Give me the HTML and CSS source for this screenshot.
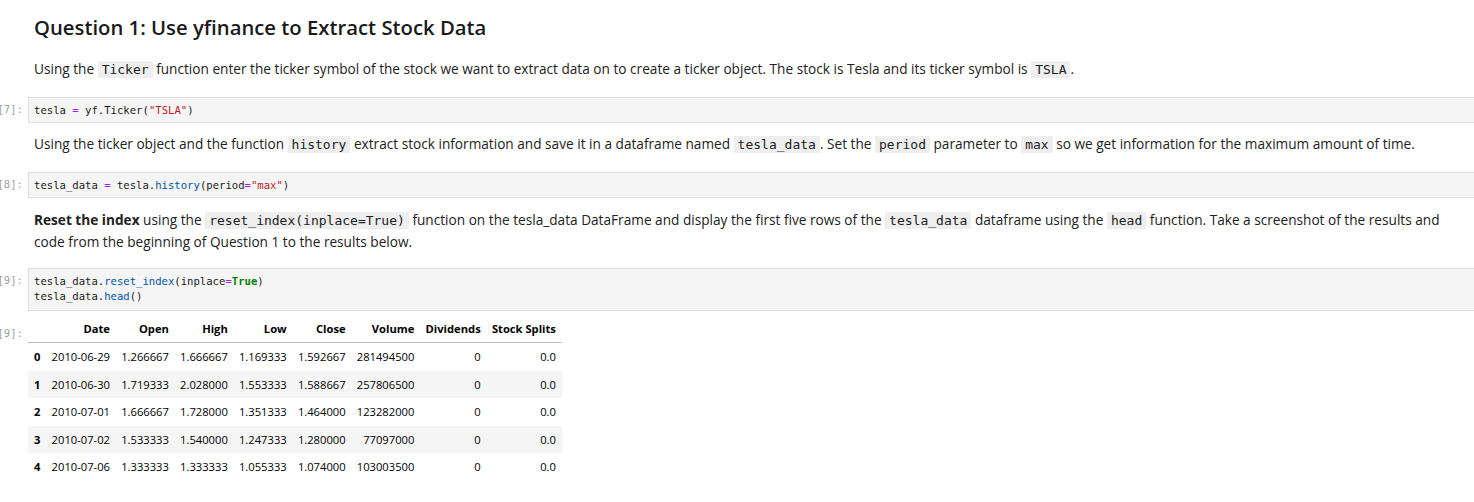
FILE: index.html
```html
<!DOCTYPE html>
<html>
<head>
<meta charset="utf-8">
<link rel="stylesheet" href="styles.css">
</head>
<body>
<div class="notebook">
  <div class="cell md">
    <div class="prompt"></div>
    <div class="content">
      <h2 class="title">Question 1: Use yfinance to Extract Stock Data</h2>
    </div>
  </div>
  <div class="cell md">
    <div class="prompt"></div>
    <div class="content">
      <p class="para">Using the <code class="ic">Ticker</code> function enter the ticker symbol of the stock we want to extract data on to create a ticker object. The stock is Tesla and its ticker symbol is <code class="ic">TSLA</code>.</p>
    </div>
  </div>
  <div class="cell code">
    <div class="prompt">[7]:</div>
    <div class="editor"><span class="v">tesla</span> <span class="op">=</span> <span class="v">yf</span>.<span class="v">Ticker</span>(<span class="s">"TSLA"</span>)</div>
  </div>
  <div class="cell md">
    <div class="prompt"></div>
    <div class="content">
      <p class="para">Using the ticker object and the function <code class="ic">history</code> extract stock information and save it in a dataframe named <code class="ic">tesla_data</code>. Set the <code class="ic">period</code> parameter to <code class="ic">max</code> so we get information for the maximum amount of time.</p>
    </div>
  </div>
  <div class="cell code">
    <div class="prompt">[8]:</div>
    <div class="editor"><span class="v">tesla_data</span> <span class="op">=</span> <span class="v">tesla</span>.<span class="p">history</span>(<span class="v">period</span><span class="op">=</span><span class="s">"max"</span>)</div>
  </div>
  <div class="cell md">
    <div class="prompt"></div>
    <div class="content">
      <p class="para"><strong>Reset the index</strong> using the <code class="ic">reset_index(inplace=True)</code> function on the tesla_data DataFrame and display the first five rows of the <code class="ic">tesla_data</code> dataframe using the <code class="ic">head</code> function. Take a screenshot of the results and code from the beginning of Question 1 to the results below.</p>
    </div>
  </div>
  <div class="cell code">
    <div class="prompt">[9]:</div>
    <div class="editor tall"><span class="v">tesla_data</span>.<span class="p">reset_index</span>(<span class="v">inplace</span><span class="op">=</span><span class="k">True</span>)
<span class="v">tesla_data</span>.<span class="p">head</span>()</div>
  </div>
  <div class="cell output">
    <div class="prompt oprompt">[9]:</div>
    <div class="outarea">
      <table class="df">
        <thead>
          <tr><th></th><th>Date</th><th>Open</th><th>High</th><th>Low</th><th>Close</th><th>Volume</th><th>Dividends</th><th>Stock Splits</th></tr>
        </thead>
        <tbody>
          <tr><th>0</th><td>2010-06-29</td><td>1.266667</td><td>1.666667</td><td>1.169333</td><td>1.592667</td><td>281494500</td><td>0</td><td>0.0</td></tr>
          <tr><th>1</th><td>2010-06-30</td><td>1.719333</td><td>2.028000</td><td>1.553333</td><td>1.588667</td><td>257806500</td><td>0</td><td>0.0</td></tr>
          <tr><th>2</th><td>2010-07-01</td><td>1.666667</td><td>1.728000</td><td>1.351333</td><td>1.464000</td><td>123282000</td><td>0</td><td>0.0</td></tr>
          <tr><th>3</th><td>2010-07-02</td><td>1.533333</td><td>1.540000</td><td>1.247333</td><td>1.280000</td><td>77097000</td><td>0</td><td>0.0</td></tr>
          <tr><th>4</th><td>2010-07-06</td><td>1.333333</td><td>1.333333</td><td>1.055333</td><td>1.074000</td><td>103003500</td><td>0</td><td>0.0</td></tr>
        </tbody>
      </table>
    </div>
  </div>
</div>
</body>
</html>
```
FILE: styles.css
```css
html, body {
  margin: 0;
  padding: 0;
  background: #ffffff;
  overflow: hidden;
}
body {
  font-family: "Open Sans", "Noto Sans", sans-serif;
  color: #212121;
}
.notebook {
  display: flex;
  flex-direction: column;
  width: 1480px;
}
.cell {
  display: flex;
  align-items: flex-start;
}
.prompt {
  width: 28px;
  flex: 0 0 28px;
  overflow: hidden;
  white-space: nowrap;
  display: flex;
  justify-content: flex-end;
  font-family: "DejaVu Sans Mono", monospace;
  font-size: 10.6px;
  color: #a0a0a0;
  padding-right: 5px;
  box-sizing: border-box;
  line-height: 15px;
}
.code .prompt {
  padding-top: 5px;
}
.content {
  flex: 1;
  padding: 0 30px 0 6px;
}
.title {
  margin: 0;
  padding: 12px 0 0 0;
  font-size: 20.3px;
  font-weight: 600;
  line-height: 30px;
  height: 30px;
  color: #1a1a1a;
}
.para {
  margin: 0;
  font-size: 13.65px;
  line-height: 22px;
}
.cell.md:nth-child(2) { padding-top: 16px; padding-bottom: 17px; }
.cell.md:nth-child(4) { padding-top: 10px; padding-bottom: 17px; }
.cell.md:nth-child(6) { padding-top: 11px; padding-bottom: 15px; }
.ic {
  font-family: "DejaVu Sans Mono", monospace;
  font-size: 13px;
  line-height: 14px;
  background: #eeeeee;
  padding: 1px 4px;
  color: #212121;
}
.editor {
  flex: 1;
  background: #f5f5f5;
  border: 1px solid #e0e0e0;
  border-right: none;
  padding: 5px 5px 4px;
  font-family: "DejaVu Sans Mono", monospace;
  font-size: 10.6px;
  line-height: 15px;
  white-space: pre;
  color: #1b1b1b;
}
.editor.tall {
  padding-bottom: 6px;
}
.v { color: #1b1b1b; }
.op { color: #aa22ff; }
.s { color: #ba2121; }
.p { color: #0055aa; }
.k { color: #008000; font-weight: bold; }
.output {
  padding-top: 3px;
}
.oprompt {
  padding-top: 12px;
}
.df {
  border-collapse: collapse;
  font-family: "Open Sans", "Noto Sans", sans-serif;
  font-size: 11.2px;
  color: #000;
}
.df th, .df td {
  text-align: right;
  padding: 0 5.6px;
  height: 27.5px;
  white-space: nowrap;
}
.df thead th {
  font-weight: 700;
  border-bottom: 1px solid #bdbdbd;
  height: 28px;
}
.df tbody th {
  font-weight: 700;
  padding-left: 6px;
}
.df tbody tr:nth-child(odd) {
  background: #ffffff;
}
.df tbody tr:nth-child(even) {
  background: #f5f5f5;
}
```
